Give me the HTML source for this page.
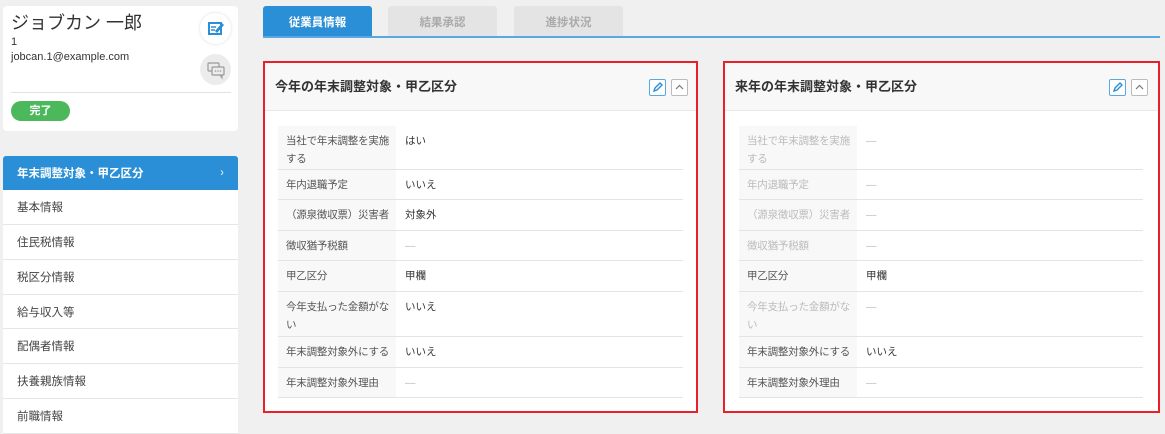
<!DOCTYPE html>
<html><head><meta charset="utf-8"><style>
*{margin:0;padding:0;box-sizing:border-box}
body{width:1165px;height:423px;background:#f0f0f0;font-family:"Liberation Sans","Noto Sans CJK JP",sans-serif;color:#333;position:relative;overflow:hidden;font-size:11px}
.a{position:absolute}
.card{background:#fff;border-radius:4px}
.menu div{position:absolute;left:3px;width:235px;background:#fff;border-bottom:1px solid #e6e6e6;padding-left:14px;font-size:11.5px;color:#444;display:flex;align-items:center}
.tab{position:absolute;top:6px;height:31px;width:109px;border-radius:3px 3px 0 0;background:#e4e4e4;color:#aaa;font-weight:bold;font-size:11.5px;display:flex;align-items:center;justify-content:center}
.panel{position:absolute;top:61px;height:352px;border:2px solid #e8202a;background:#fff}
.ph{position:absolute;left:0;right:0;top:0;height:48px;background:#f8f8f8;border-bottom:1px solid #e8e8e8;font-size:13px;font-weight:bold;padding-left:10px;line-height:48px;color:#333}
.ic{position:absolute;top:16px;width:17px;height:17px;border:1px solid #bbb;border-radius:2px;background:#fff}
.r{position:absolute;border-bottom:1px solid #e4e4e4;font-size:10.5px}
.r .l{position:absolute;left:0;top:0;bottom:0;width:118px;background:#f8f8f8;padding:6px 0 6px 8px;line-height:18px;color:#555;letter-spacing:-0.2px}
.r .v{position:absolute;left:127px;top:6px;line-height:18px;color:#333}
.g .l{color:#bbb}.g .v{color:#bbb}
.d .v{color:#bbb}
</style></head><body>
<div class="a card" style="left:3px;top:6px;width:235px;height:125px">
<div class="a" style="left:8px;top:5px;font-size:18px;line-height:24px;color:#333">ジョブカン 一郎</div>
<div class="a" style="left:8px;top:30px;font-size:11px">1</div>
<div class="a" style="left:8px;top:45px;font-size:11px">jobcan.1@example.com</div>
<div class="a" style="left:197px;top:7px;width:31px;height:31px;border-radius:50%;background:#fff;box-shadow:0 0 3px rgba(0,0,0,.15)"><svg width="31" height="31" viewBox="0 0 31 31"><rect x="9" y="10" width="12" height="11" fill="none" stroke="#2a8fd6" stroke-width="2"/><path d="M11 14h5M11 17h4" stroke="#2a8fd6" stroke-width="1.5"/><path d="M15 18l7-8 2 2-7 8z" fill="#2a8fd6"/></svg></div>
<div class="a" style="left:197px;top:48px;width:31px;height:31px;border-radius:50%;background:#ececec"><svg width="31" height="31" viewBox="0 0 31 31"><rect x="8" y="9" width="11" height="8" rx="1" fill="none" stroke="#999" stroke-width="1.2"/><rect x="12" y="13" width="12" height="8" rx="1" fill="#ececec" stroke="#999" stroke-width="1.2"/><path d="M20 21l2 3v-3" fill="none" stroke="#999"/><circle cx="15.5" cy="17" r=".8" fill="#999"/><circle cx="18" cy="17" r=".8" fill="#999"/><circle cx="20.5" cy="17" r=".8" fill="#999"/></svg></div>
<div class="a" style="left:8px;top:86px;width:220px;border-top:1px solid #e2e2e2"></div>
<div class="a" style="left:8px;top:95px;width:59px;height:20px;border-radius:10px;background:#4cb85c;color:#fff;font-weight:bold;font-size:11px;text-align:center;line-height:20px">完了</div>
</div>
<div class="menu">
<div style="top:156px;height:34px;background:#2a8fd6;color:#fff;font-weight:bold;border:none;border-radius:3px 3px 0 0">年末調整対象・甲乙区分<span style="position:absolute;right:14px;color:#bcdcf3">›</span></div>
<div style="top:190px;height:35px">基本情報</div>
<div style="top:225px;height:35px">住民税情報</div>
<div style="top:260px;height:35px">税区分情報</div>
<div style="top:295px;height:34px">給与収入等</div>
<div style="top:329px;height:35px">配偶者情報</div>
<div style="top:364px;height:35px">扶養親族情報</div>
<div style="top:399px;height:35px">前職情報</div>
</div>
<div class="tab" style="left:263px;background:#2a8fd6;color:#fff">従業員情報</div>
<div class="tab" style="left:388px">結果承認</div>
<div class="tab" style="left:514px">進捗状況</div>
<div class="a" style="left:263px;top:36px;width:897px;height:2px;background:#5aa8e0"></div>

<div class="panel" style="left:263px;width:435px">
<div class="ph">今年の年末調整対象・甲乙区分</div>
<div class="ic" style="left:384px;border-color:#5aa8e0"><svg width="15" height="15" viewBox="0 0 15 15"><path d="M4 11l1-3 5-5 2 2-5 5z" fill="none" stroke="#2a8fd6" stroke-width="1.4"/></svg></div>
<div class="ic" style="left:406px"><svg width="15" height="15" viewBox="0 0 15 15"><path d="M4 9l3.5-3.5L11 9" fill="none" stroke="#777" stroke-width="1.2"/></svg></div>
<div class="r" style="left:13px;width:405px;top:63px;height:44px"><div class="l">当社で年末調整を実施<br>する</div><div class="v">はい</div></div>
<div class="r" style="left:13px;width:405px;top:107px;height:30px"><div class="l">年内退職予定</div><div class="v">いいえ</div></div>
<div class="r" style="left:13px;width:405px;top:137px;height:31px"><div class="l" style="white-space:nowrap">（源泉徴収票）災害者</div><div class="v">対象外</div></div>
<div class="r d" style="left:13px;width:405px;top:168px;height:30px"><div class="l">徴収猶予税額</div><div class="v">—</div></div>
<div class="r" style="left:13px;width:405px;top:198px;height:31px"><div class="l">甲乙区分</div><div class="v">甲欄</div></div>
<div class="r" style="left:13px;width:405px;top:229px;height:45px"><div class="l">今年支払った金額がな<br>い</div><div class="v">いいえ</div></div>
<div class="r" style="left:13px;width:405px;top:274px;height:31px"><div class="l" style="white-space:nowrap">年末調整対象外にする</div><div class="v">いいえ</div></div>
<div class="r d" style="left:13px;width:405px;top:305px;height:30px"><div class="l">年末調整対象外理由</div><div class="v">—</div></div>
</div>

<div class="panel" style="left:723px;width:437px">
<div class="ph">来年の年末調整対象・甲乙区分</div>
<div class="ic" style="left:384px;border-color:#5aa8e0"><svg width="15" height="15" viewBox="0 0 15 15"><path d="M4 11l1-3 5-5 2 2-5 5z" fill="none" stroke="#2a8fd6" stroke-width="1.4"/></svg></div>
<div class="ic" style="left:406px"><svg width="15" height="15" viewBox="0 0 15 15"><path d="M4 9l3.5-3.5L11 9" fill="none" stroke="#777" stroke-width="1.2"/></svg></div>
<div class="r g" style="left:14px;width:404px;top:63px;height:44px"><div class="l">当社で年末調整を実施<br>する</div><div class="v">—</div></div>
<div class="r g" style="left:14px;width:404px;top:107px;height:30px"><div class="l">年内退職予定</div><div class="v">—</div></div>
<div class="r g" style="left:14px;width:404px;top:137px;height:31px"><div class="l" style="white-space:nowrap">（源泉徴収票）災害者</div><div class="v">—</div></div>
<div class="r g" style="left:14px;width:404px;top:168px;height:30px"><div class="l">徴収猶予税額</div><div class="v">—</div></div>
<div class="r" style="left:14px;width:404px;top:198px;height:31px"><div class="l">甲乙区分</div><div class="v">甲欄</div></div>
<div class="r g" style="left:14px;width:404px;top:229px;height:45px"><div class="l">今年支払った金額がな<br>い</div><div class="v">—</div></div>
<div class="r" style="left:14px;width:404px;top:274px;height:31px"><div class="l" style="white-space:nowrap">年末調整対象外にする</div><div class="v">いいえ</div></div>
<div class="r d" style="left:14px;width:404px;top:305px;height:30px"><div class="l">年末調整対象外理由</div><div class="v">—</div></div>
</div>
</body></html>
